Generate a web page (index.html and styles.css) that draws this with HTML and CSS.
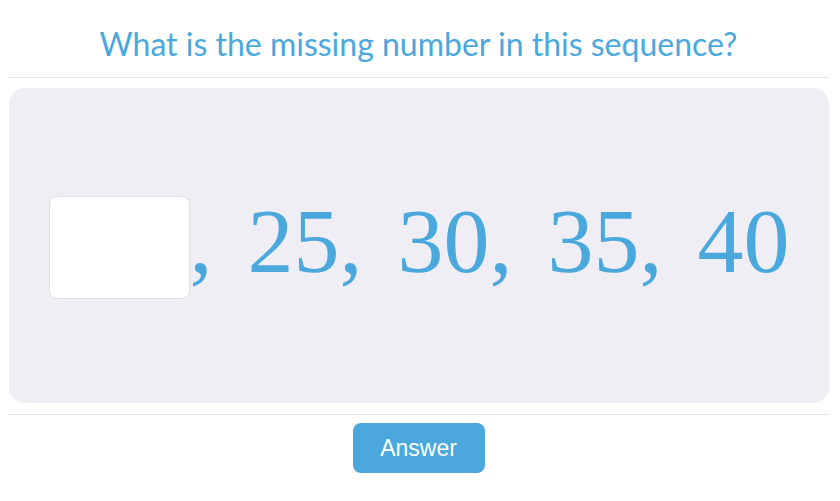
FILE: index.html
```html
<!DOCTYPE html>
<html>
<head>
<meta charset="utf-8">
<link rel="stylesheet" href="styles.css">
</head>
<body>
<div class="page">
  <h1 class="question">What is the missing number in this sequence?</h1>
  <div class="panel">
    <div class="sequence">
      <div class="blank"></div>
      <span class="numbers">, 25, 30, 35, 40</span>
    </div>
  </div>
  <div class="actions">
    <button class="answer">Answer</button>
  </div>
</div>
</body>
</html>
```
FILE: styles.css
```css
html, body {
  margin: 0;
  padding: 0;
  background: #ffffff;
}
.page {
  width: 821px;
  margin-left: 8px;
}
.question {
  margin: 0;
  height: 78px;
  box-sizing: border-box;
  padding-top: 25px;
  font-family: Lato, "Liberation Sans", sans-serif;
  font-weight: 400;
  font-size: 32px;
  line-height: 38px;
  color: #4aa8dc;
  text-align: center;
  border-bottom: 1px solid #e2e2e8;
}
.panel {
  margin: 10px 0 0 1px;
  height: 315px;
  background: #f0eef5;
  border-radius: 16px;
  display: flex;
  align-items: center;
  justify-content: center;
}
.sequence {
  display: flex;
  align-items: center;
  margin-top: 3px;
}
.blank {
  width: 141px;
  height: 103px;
  box-sizing: border-box;
  background: #ffffff;
  border: 1px solid #dde1ea;
  border-radius: 8px;
}
.numbers {
  font-family: "Liberation Serif", serif;
  font-size: 92px;
  line-height: 102px;
  word-spacing: 12px;
  color: #4aa8dc;
  white-space: pre;
  position: relative;
  top: -6px;
}
.actions {
  margin-top: 11px;
  border-top: 1px solid #e2e2e8;
  padding-top: 8px;
  display: flex;
  justify-content: center;
}
.answer {
  width: 132px;
  height: 50px;
  border: none;
  border-radius: 8px;
  background: #4aa8dc;
  color: #ffffff;
  font-family: "Liberation Sans", Arial, sans-serif;
  font-size: 23px;
  padding: 0;
}
```
